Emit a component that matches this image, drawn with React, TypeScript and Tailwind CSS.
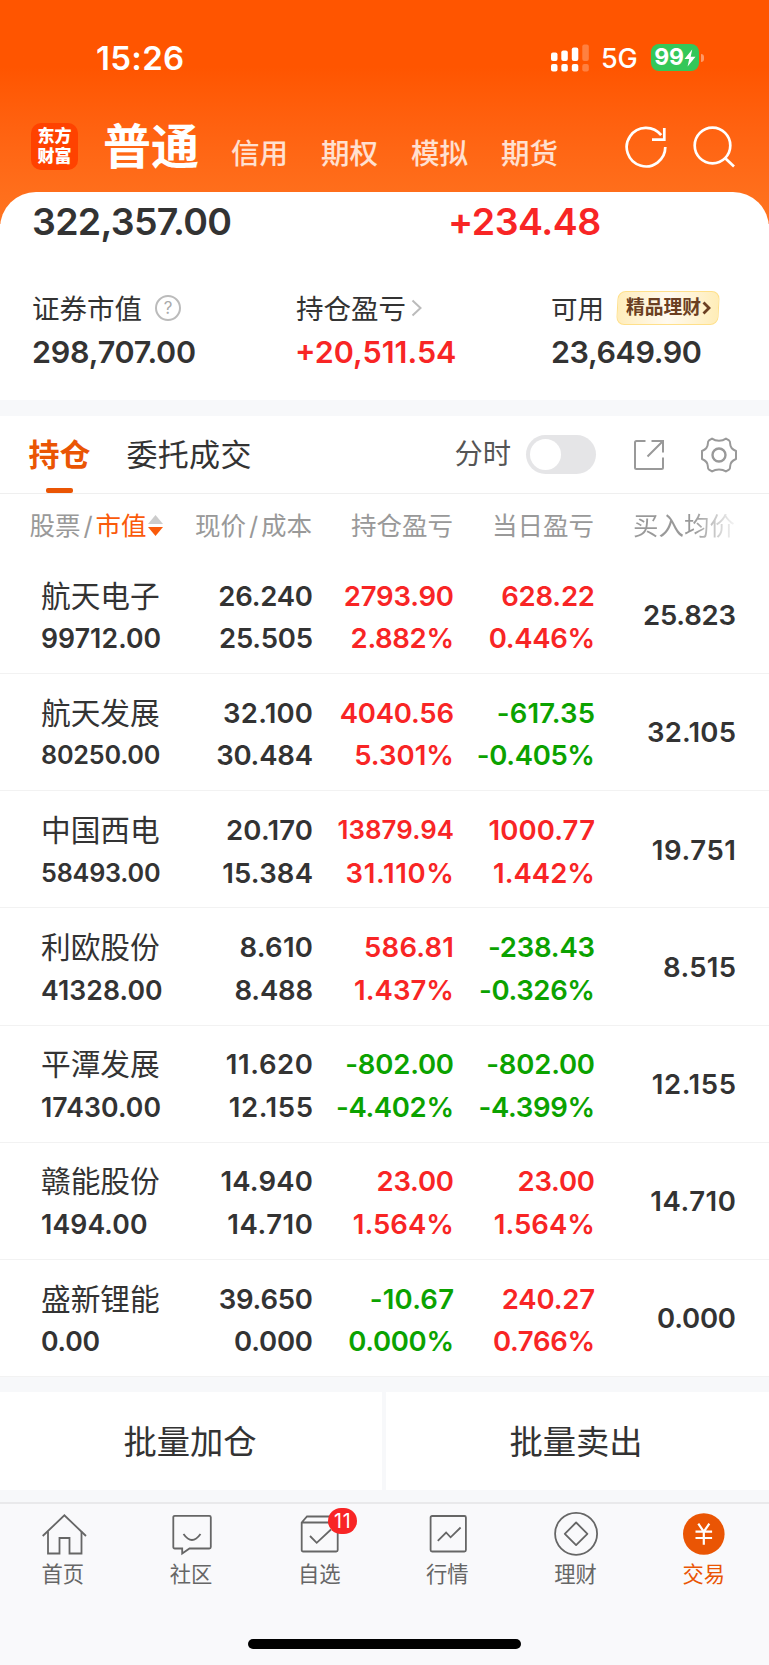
import type { ReactNode } from "react";
import clsx from "clsx";

type Holding = {
  name: string;
  value: string;
  price: string;
  cost: string;
  profit: string;
  profitRate: string;
  today: string;
  todayRate: string;
  average: string;
  small?: boolean;
};

const holdings: Holding[] = [
  { name: "航天电子", value: "99712.00", price: "26.240", cost: "25.505", profit: "2793.90", profitRate: "2.882%", today: "628.22", todayRate: "0.446%", average: "25.823" },
  { name: "航天发展", value: "80250.00", price: "32.100", cost: "30.484", profit: "4040.56", profitRate: "5.301%", today: "-617.35", todayRate: "-0.405%", average: "32.105", small: true },
  { name: "中国西电", value: "58493.00", price: "20.170", cost: "15.384", profit: "13879.94", profitRate: "31.110%", today: "1000.77", todayRate: "1.442%", average: "19.751", small: true },
  { name: "利欧股份", value: "41328.00", price: "8.610", cost: "8.488", profit: "586.81", profitRate: "1.437%", today: "-238.43", todayRate: "-0.326%", average: "8.515" },
  { name: "平潭发展", value: "17430.00", price: "11.620", cost: "12.155", profit: "-802.00", profitRate: "-4.402%", today: "-802.00", todayRate: "-4.399%", average: "12.155" },
  { name: "赣能股份", value: "1494.00", price: "14.940", cost: "14.710", profit: "23.00", profitRate: "1.564%", today: "23.00", todayRate: "1.564%", average: "14.710" },
  { name: "盛新锂能", value: "0.00", price: "39.650", cost: "0.000", profit: "-10.67", profitRate: "0.000%", today: "240.27", todayRate: "0.766%", average: "0.000" },
];

function StatusBar() {
  return (
    <div className="flex h-[114px] items-center pt-px pr-[65px] pl-[96px] text-white">
      <span className="pt-px text-[33px] font-semibold tracking-[0.3px]">15:26</span>
      <svg className="ml-auto" width="38" height="28" viewBox="0 0 38 28" fill="currentColor">
        <rect x="0" y="8.5" width="6.5" height="8.5" rx="2" />
        <rect x="10.3" y="6.5" width="6.5" height="10.5" rx="2" />
        <rect x="20.8" y="3.5" width="6.5" height="13.5" rx="2" />
        <rect x="0" y="20" width="6.5" height="7.5" rx="2" />
        <rect x="10.3" y="20" width="6.5" height="7.5" rx="2" />
        <rect x="20.8" y="20" width="6.5" height="7.5" rx="2" />
        <g opacity="0.25">
          <rect x="31.3" y="0.5" width="6.5" height="16.5" rx="2" />
          <rect x="31.3" y="20" width="6.5" height="7.5" rx="2" />
        </g>
      </svg>
      <span className="ml-[12px] w-[36px] pt-[2px] text-[27px] font-medium tracking-[-0.3px]">5G</span>
      <span className="ml-[14px] flex h-[27px] w-[48px] items-center justify-center rounded-[8px] bg-[#34c759] text-[23px] font-bold tracking-[-0.3px]">
        99
        <svg width="12" height="18" viewBox="0 0 12 18" fill="currentColor">
          <path d="M8.2 0.5 0.5 10h4.7L3.6 17.5 11.5 7.8H6.7Z" />
        </svg>
      </span>
      <span className="ml-[2px] h-[8px] w-[3px] rounded-r-full bg-white/40" />
    </div>
  );
}

function NavBar() {
  return (
    <div className="flex h-[62px] items-center pr-[34.5px] pl-[31px] text-white">
      <div className="mt-[3px] flex size-[47px] flex-col items-center justify-center gap-[2.5px] rounded-[10px] bg-[#ff4200] text-[17px] font-black">
        <span>东方</span>
        <span>财富</span>
      </div>
      <h1 className="ml-[25px] w-[98px] pt-[3px] text-[48px] font-bold">普通</h1>
      <div className="ml-[30px] flex gap-[33px] pt-[19px] text-[28.5px] font-medium text-white/80">
        <span>信用</span>
        <span>期权</span>
        <span>模拟</span>
        <span>期货</span>
      </div>
      <svg className="mt-[3px] ml-auto" width="44" height="44" viewBox="0 0 44 44" fill="none" stroke="currentColor" strokeWidth="2.7">
        <path d="M41.3 22A19.3 19.3 0 1 1 37.2 10.2" />
        <path d="M40.3 3v11.7H28" />
      </svg>
      <svg className="mt-px ml-[23px]" width="44" height="44" viewBox="0 0 44 44" fill="none" stroke="currentColor" strokeWidth="2.7">
        <circle cx="21.5" cy="21.5" r="17.8" />
        <path d="m34 34 9 8.5" />
      </svg>
    </div>
  );
}

function Summary() {
  return (
    <section className="rounded-t-[36px] bg-white pt-[8px] pb-[28px] text-[#333]">
      <div className="grid h-[44px] grid-cols-[416px_1fr] items-center pl-[32px] text-[37.5px] font-semibold">
        <span className="tracking-[-0.7px]">322,357.00</span>
        <span className="tracking-[-0.5px] text-[#f82525]">+234.48</span>
      </div>
      <div className="mt-[46px] grid grid-cols-[263px_256px_1fr] pl-[32px]">
        <div>
          <div className="flex h-[36px] items-center text-[27.5px]">
            <span className="pt-[3px]">证券市值</span>
            <span className="ml-[13px] flex size-[26px] items-center justify-center rounded-full border-2 border-[#bbb] text-[17px] text-[#aaa]">?</span>
          </div>
          <Amount className="tracking-[-0.2px]">298,707.00</Amount>
        </div>
        <div>
          <div className="flex h-[36px] items-center pl-px text-[27.5px]">
            <span className="pt-[3px]">持仓盈亏</span>
            <svg className="ml-[4px]" width="13" height="18" viewBox="0 0 13 18" fill="none" stroke="#bbb" strokeWidth="2">
              <path d="m2.5 1.5 8 7.5-8 7.5" />
            </svg>
          </div>
          <Amount className="text-[#f82525]">+20,511.54</Amount>
        </div>
        <div>
          <div className="flex h-[36px] items-center text-[26.5px]">
            <span className="pt-[2px]">可用</span>
            <span className="relative ml-[13px] flex h-[34px] w-[102px] items-center pl-[9px] text-[18.8px] font-bold text-[#6b3f22]">
              <span className="absolute inset-0 -skew-x-3 rounded-[8px] border-[1.5px] border-[#ffe08a] bg-linear-to-r from-[#ffedbb] via-[#fffaf0] to-[#ffedb8]" />
              <span className="relative pt-px">精品理财</span>
              <svg className="relative ml-px" width="10" height="14" viewBox="0 0 10 14" fill="none" stroke="currentColor" strokeWidth="2.8">
                <path d="m1.5 1.5 5.5 5.5-5.5 5.5" />
              </svg>
            </span>
          </div>
          <Amount className="tracking-[-0.4px]">23,649.90</Amount>
        </div>
      </div>
    </section>
  );
}

function Amount({ children, className }: { children: ReactNode; className?: string }) {
  return (
    <div className={clsx("mt-[6px] flex h-[40px] items-center text-[30.5px] font-semibold", className)}>
      {children}
    </div>
  );
}

function Tabs() {
  return (
    <div className="flex h-[78px] items-center border-b border-[#efefef] bg-white pr-[31px] pl-[28.5px] text-[31px]">
      <div className="relative flex h-full w-[62px] items-center font-bold text-[#ea5504]">
        持仓
        <span className="absolute bottom-0 left-[17.5px] h-[5px] w-[27px] rounded-[2px] bg-[#ea5504]" />
      </div>
      <span className="ml-[36px] tracking-[0.3px] text-[#333]">委托成交</span>
      <span className="ml-auto text-[28.3px] text-[#555]">分时</span>
      <span className="ml-[15px] flex h-[39px] w-[70px] items-center rounded-full bg-[#e5e5e7] pl-[4px]">
        <span className="size-[31px] rounded-full bg-white" />
      </span>
      <svg className="ml-[36px]" width="34" height="34" viewBox="0 0 34 34" fill="none" stroke="#999" strokeWidth="2">
        <path d="M13.5 3h-9Q3 3 3 4.5v25Q3 31 4.5 31h25q1.5 0 1.5-1.5v-10" />
        <path d="M19.5 3H31v11.5M31 3 15.5 18.5" />
      </svg>
      <svg className="ml-[34px]" width="38" height="38" viewBox="0 0 38 38" fill="none" stroke="#999" strokeWidth="2" strokeLinejoin="round">
        <path d="M2 15C5.5 13.5 7.8 11.5 7.8 8Q7.8 5 9 4.3L12 2.6C16 5.3 22 5.3 26 2.6L29 4.3Q30.2 5 30.2 8C30.2 11.5 32.5 13.5 36 15V23C32.5 24.5 30.2 26.5 30.2 30Q30.2 33 29 33.7L26 35.4C22 32.7 16 32.7 12 35.4L9 33.7Q7.8 33 7.8 30C7.8 26.5 5.5 24.5 2 23Z" />
        <circle cx="19" cy="19" r="6.5" strokeWidth="2.4" />
      </svg>
    </div>
  );
}

function TableHead() {
  return (
    <div className="grid h-[63px] grid-cols-[184px_128px_141px_141px_141px] items-center bg-white text-right text-[25.5px] text-[#999]">
      <span className="flex items-center pl-[29.5px]">
        股票
        <span className="w-[15px] text-center">/</span>
        <span className="text-[#fa5a0a]">市值</span>
        <svg className="ml-[1px]" width="15" height="21" viewBox="0 0 15 21">
          <path d="M7.5 0 15 9H0Z" fill="#ccc" />
          <path d="M7.5 21 0 12h15Z" fill="#fa5a0a" />
        </svg>
      </span>
      <span className="flex justify-end">
        现价<span className="w-[15px] text-center">/</span>成本
      </span>
      <span>持仓盈亏</span>
      <span>当日盈亏</span>
      <span className="bg-linear-to-r from-[#999] from-70% to-[#999]/10 bg-clip-text text-transparent">买入均价</span>
    </div>
  );
}

// the digit 1 is narrow in Inter, so open the tracking for every one of them
function Figure({ children, className }: { children: string; className?: string }) {
  const ones = children.split("1").length - 1;
  const base = children.endsWith("%") ? -0.35 : -0.2;
  const spacing = base + (ones * 2.4) / children.length;
  return (
    <p className={className} style={{ letterSpacing: spacing, marginRight: -spacing }}>
      {children}
    </p>
  );
}

function Change({ amount, rate }: { amount: string; rate: string }) {
  return (
    <div className={amount.startsWith("-") ? "text-[#0ba200]" : "text-[#f82525]"}>
      <Figure className={clsx(amount.length > 7 && "text-[25.8px]")}>{amount}</Figure>
      <Figure>{rate}</Figure>
    </div>
  );
}

function HoldingRow({ item }: { item: Holding }) {
  return (
    <div className="grid h-[117.14px] grid-cols-[184px_129px_141px_141px_141px] border-b border-[#f2f2f2] bg-white pt-[17.8px] text-right text-[27.5px] leading-[42.5px] font-semibold text-[#333]">
      <div className="pl-[41px] text-left">
        <p className="text-[29.7px] font-normal">{item.name}</p>
        <Figure className={item.small ? "text-[25.2px]" : "text-[26.6px]"}>{item.value}</Figure>
      </div>
      <div>
        <Figure>{item.price}</Figure>
        <Figure>{item.cost}</Figure>
      </div>
      <Change amount={item.profit} rate={item.profitRate} />
      <Change amount={item.today} rate={item.todayRate} />
      <Figure className="pt-[19.5px]">{item.average}</Figure>
    </div>
  );
}

function TabItem({ label, active, badge, children }: { label: string; active?: boolean; badge?: string; children: ReactNode }) {
  return (
    <div className={clsx("relative flex flex-1 flex-col items-center pt-[6px]", active ? "text-[#ea5504]" : "text-[#666]")}>
      <svg width="48" height="48" viewBox="0 0 48 48" fill="none" stroke="currentColor" strokeWidth="1.8">
        {children}
      </svg>
      <span className="mt-[6.5px] mr-[2.5px] text-[21.3px]">{label}</span>
      {badge && (
        <span className="absolute top-[4.5px] left-[72px] flex h-[26px] w-[29px] items-center justify-center rounded-full bg-[#f82525] text-[19.5px] tracking-[0.8px] text-white">
          {badge}
        </span>
      )}
    </div>
  );
}

function TabBar() {
  return (
    <nav className="flex h-[137px] border-t-2 border-[#e9e9eb]">
      <TabItem label="首页">
        <path d="M2.7 26 24.4 5.3 46 26" />
        <path d="M8 21.5v22h11.5V28h10v15.5h12v-22" />
      </TabItem>
      <TabItem label="社区">
        <path d="M6.8 5.8h34.5q1.5 0 1.5 1.5V37q0 1.5-1.5 1.5H21.5L14.2 43.5v-5H6.8q-1.5 0-1.5-1.5V7.3q0-1.5 1.5-1.5Z" />
        <path d="M15.5 24q8.5 12 17 0" />
      </TabItem>
      <TabItem label="自选" badge="11">
        <path d="M5.7 12.5 11 6.5h26l4.7 6V40q0 1.5-1.5 1.5h-33q-1.5 0-1.5-1.5ZM5.7 12.5h36" />
        <path d="m14 26 6.7 6.8L35 19.5" />
      </TabItem>
      <TabItem label="行情">
        <rect x="5.6" y="6" width="35.3" height="35.5" rx="1.5" />
        <path d="m12.8 30.8 8.3-8.3 4.5 4.8 10-9.8" />
      </TabItem>
      <TabItem label="理财">
        <circle cx="23.1" cy="23.8" r="21" />
        <path d="M23.1 12.5 34.4 23.8 23.1 35.1 11.8 23.8Z" strokeLinejoin="round" />
      </TabItem>
      <TabItem label="交易" active>
        <circle cx="22.8" cy="24" r="20.8" fill="currentColor" stroke="none" />
        <path d="m17.3 13.7 5.5 8 5.5-8M22.8 21.7v13M14.5 21.7h16.6M14.5 28h16.6" stroke="white" strokeWidth="2.2" />
      </TabItem>
    </nav>
  );
}

export default function App() {
  return (
    <div className="h-[1665px] w-[769px] overflow-hidden bg-[#f9f9fb] font-[Inter,'Noto_Sans_CJK_SC',sans-serif] leading-none whitespace-nowrap">
      <header className="bg-linear-to-b from-[#ff5500] from-30% to-[#ff7420] pb-[48px]">
        <StatusBar />
        <NavBar />
      </header>
      <main className="-mt-[32px]">
        <Summary />
        <div className="h-[16px] bg-[#f7f8fa]" />
        <Tabs />
        <TableHead />
        {holdings.map((item) => (
          <HoldingRow key={item.name} item={item} />
        ))}
        <div className="grid grid-cols-[382px_383px] gap-[4px] bg-[#f7f8fa] pt-[15px] pb-[12px] text-[33.3px] text-[#333]">
          <button className="h-[98px] bg-white pt-[4px] pr-[2px]">批量加仓</button>
          <button className="h-[98px] bg-white pt-[4px] pr-[3px]">批量卖出</button>
        </div>
      </main>
      <TabBar />
      <div className="mx-auto h-[10px] w-[273px] rounded-full bg-black" />
    </div>
  );
}
